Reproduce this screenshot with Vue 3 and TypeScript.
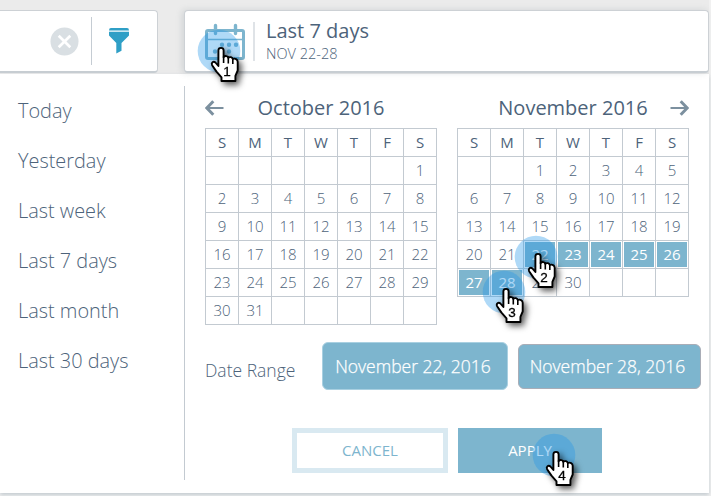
<script setup lang="ts">
interface Cell {
  label: string
  selected: boolean
}
interface Month {
  title: string
  side: string
  weeks: Cell[][]
}
interface Marker {
  step: number
  x: number
  y: number
}

const presets: string[] = ['Today', 'Yesterday', 'Last week', 'Last 7 days', 'Last month', 'Last 30 days']
const weekdays: string[] = ['S', 'M', 'T', 'W', 'T', 'F', 'S']

function buildWeeks(offset: number, days: number, from = 0, to = 0): Cell[][] {
  const weeks: Cell[][] = []
  for (let start = 1 - offset; start <= days; start += 7) {
    weeks.push(
      Array.from({ length: 7 }, (_, i) => {
        const day = start + i
        const inside = day >= 1 && day <= days
        return { label: inside ? String(day) : '', selected: inside && day >= from && day <= to }
      }),
    )
  }
  return weeks
}

const months: Month[] = [
  { title: 'October 2016', side: 'prev', weeks: buildWeeks(6, 31) },
  { title: 'November 2016', side: 'next', weeks: buildWeeks(2, 30, 22, 28) },
]

const markers: Marker[] = [
  { step: 1, x: 197, y: 29 },
  { step: 2, x: 514, y: 235 },
  { step: 3, x: 482, y: 270 },
  { step: 4, x: 532, y: 433 },
]
</script>

<template>
  <div class="page">
    <header class="top">
      <div class="card filter">
        <svg class="clear" viewBox="0 0 30 30">
          <circle cx="15" cy="15" r="14.5" fill="#d9dfe3" />
          <path d="M9 9 21 21M21 9 9 21" stroke="#fff" stroke-width="2.8" />
        </svg>
        <i class="rule" />
        <svg class="funnel" viewBox="0 0 20 26">
          <path d="M0 2.4Q0 0 2 0H18Q20 0 20 2.4V2.6H0Z" fill="#2f9fc6" />
          <path d="M0 3.8H20V7.4L12.5 15V22.8L7.3 25.4V15L0 7.4Z" fill="#2f9fc6" />
        </svg>
      </div>
      <div class="card range">
        <svg class="calendar" viewBox="0 0 40 38" fill="none" stroke="#7db5ce">
          <rect x="1.5" y="7.5" width="37" height="28" rx="1.5" stroke-width="3" />
          <path d="M2 16.5H38" stroke-width="1.5" />
          <path d="M10.5 2.5V10.5M30.5 2.5V10.5" stroke-width="3.4" stroke-linecap="round" />
          <path d="M17 21.7H17.01M24 21.7H24.01M31 21.7H31.01M10 28.5H10.01M17 28.5H17.01M24 28.5H24.01" stroke-width="4.4" stroke-linecap="round" />
        </svg>
        <i class="divider" />
        <div class="summary">
          <span class="name">Last 7 days</span>
          <span class="dates">NOV 22-28</span>
        </div>
      </div>
    </header>

    <main class="panel">
      <nav class="presets">
        <a v-for="p in presets" :key="p">{{ p }}</a>
      </nav>
      <section class="picker">
        <div class="months">
          <div v-for="m in months" :key="m.title" class="month">
            <div class="caption" :class="m.side">
              <svg class="arrow" viewBox="0 0 19 16" fill="none" stroke="#7c909f">
                <path d="M2 8H18.5" stroke-width="2" />
                <path d="M8.3 1.3 1.8 8 8.3 14.7" stroke-width="3" />
              </svg>
              <span>{{ m.title }}</span>
            </div>
            <div class="grid">
              <b v-for="(d, i) in weekdays" :key="i">{{ d }}</b>
              <template v-for="(w, wi) in m.weeks" :key="wi">
                <span v-for="(c, ci) in w" :key="ci" :class="{ selected: c.selected }">{{ c.label }}</span>
              </template>
            </div>
          </div>
        </div>
        <div class="fields">
          <label>Date Range</label>
          <div class="field start">November 22, 2016</div>
          <div class="field end">November 28, 2016</div>
        </div>
        <div class="actions">
          <button class="cancel">CANCEL</button>
          <button class="apply">APPLY</button>
        </div>
      </section>
    </main>

    <svg v-for="m in markers" :key="m.step" class="marker" :style="{ left: m.x + 'px', top: m.y + 'px' }" viewBox="0 0 60 72">
      <circle cx="22" cy="22" r="21.3" fill="#2196e8" fill-opacity=".36" />
      <g class="hand" transform="translate(13.8 18)">
        <path
          d="M7.6 3.3C7.6 0 12.8 0 12.8 3.3V10.2C14.2 8.4 17 8.9 17.4 10.8C19 9.5 21.6 10.1 22 12C24.2 11 26.9 12.2 26.9 14.8V23.5L24.6 28.8V34H10.7V30.3L5.7 24.6L1.3 18.2C.1 15.8 2.6 13.8 4.6 15.5L7.6 19Z"
          fill="#fff" stroke="#000" stroke-width="1.9" stroke-linejoin="round" />
        <path d="M12.8 9.5V16M17.5 10.5V16.5M22 11.8V17" stroke="#000" stroke-width="1.6" />
        <text x="16.2" y="29" text-anchor="middle">{{ m.step }}</text>
      </g>
    </svg>
  </div>
</template>

<style>
body {
  margin: 0;
  background: #f1f1f1;
}
</style>

<style scoped>
* {
  box-sizing: border-box;
}
.page {
  position: relative;
  width: 711px;
  height: 496px;
  overflow: hidden;
  background: #f1f1f1;
  font-family: 'Open Sans', sans-serif;
  color: #4d637a;
}
.top {
  display: flex;
  justify-content: space-between;
  width: 709px;
  height: 74px;
  padding-top: 10px;
  background: #ebebeb;
}
.card {
  display: flex;
  align-items: center;
  height: 63px;
  background: #fff;
  border: 1px solid #cdd1d5;
  border-bottom: 2px solid #c7cdd2;
  border-radius: 4px;
}
.filter {
  width: 158px;
  padding-left: 50px;
  border-left: 0;
  border-radius: 0 4px 4px 0;
}
.clear {
  width: 29px;
  height: 29px;
}
.rule {
  width: 1px;
  height: 48px;
  margin: 0 17px 0 12px;
  background: #c5ccd3;
}
.funnel {
  width: 20px;
  height: 26px;
  margin-top: -1px;
}
.range {
  width: 525px;
  padding-left: 20px;
  box-shadow: -2px 0 6px rgba(120, 130, 140, 0.22);
}
.calendar {
  width: 40px;
  height: 38px;
  margin-top: 2px;
}
.divider {
  width: 2px;
  height: 39px;
  margin: 0 11px 0 8px;
  background: #dfe3e7;
}
.summary {
  display: flex;
  flex-direction: column;
}
.name {
  font-size: 20px;
  line-height: 24px;
}
.dates {
  font-size: 14.5px;
  line-height: 21px;
  font-weight: 300;
}
.panel {
  display: flex;
  width: 709px;
  height: 419px;
  padding-top: 12px;
  background: #fff;
  box-shadow: 0 2px 4px rgba(150, 165, 175, 0.5);
}
.presets {
  display: flex;
  flex-direction: column;
  flex: none;
  width: 185px;
  height: 394px;
  padding-left: 18px;
  border-right: 1px solid #c3cad1;
}
.presets a {
  height: 50px;
  line-height: 50px;
  font-size: 19.9px;
  font-weight: 300;
}
.picker {
  padding-left: 20px;
}
.months {
  display: flex;
  gap: 20px;
  height: 244px;
}
.month {
  width: 232px;
}
.caption {
  display: flex;
  align-items: center;
  justify-content: center;
  position: relative;
  height: 42px;
  font-size: 20px;
}
.arrow {
  position: absolute;
  left: 0;
  top: 13.5px;
  width: 19px;
  height: 16px;
}
.next .arrow {
  left: 213px;
  transform: scaleX(-1);
}
.grid {
  display: grid;
  grid-template-columns: repeat(7, 33px);
  grid-auto-rows: 28px;
  width: 232px;
  border-top: 1px solid #c3cad1;
  border-left: 1px solid #c3cad1;
}
.grid b,
.grid span {
  border-right: 1px solid #c3cad1;
  border-bottom: 1px solid #c3cad1;
  text-align: center;
  font-size: 15px;
  line-height: 27px;
  font-weight: 300;
}
.grid b {
  font-weight: 400;
}
.grid .selected {
  background: #7db5ce;
  box-shadow: inset 0 0 0 1px #fff;
  color: #fff;
  font-weight: 400;
}
.fields {
  display: flex;
  align-items: center;
  height: 72px;
  font-size: 17.5px;
  font-weight: 300;
}
.fields label {
  width: 117px;
  padding-top: 8px;
}
.field {
  display: flex;
  align-items: center;
  justify-content: center;
  background: #7db5ce;
  color: #fff;
  border-radius: 6px;
  -webkit-text-stroke: 0.25px #fff;
}
.start {
  width: 186px;
  height: 48px;
  padding-right: 4px;
  border: 1px solid #a9d0e1;
}
.end {
  width: 183px;
  height: 45px;
  margin-left: 10px;
  padding-right: 4px;
  border: 1px solid #a9adb7;
}
.actions {
  display: flex;
  gap: 10px;
  padding: 26px 0 0 87px;
}
.actions button {
  height: 45px;
  padding: 0 0 2px;
  border: 0;
  font: 400 15px 'Open Sans', sans-serif;
}
.actions .cancel {
  width: 156px;
  background: #fff;
  border: 5px solid #d9e9f1;
  color: #7db5ce;
}
.actions .apply {
  width: 144px;
  background: #7db5ce;
  color: #fff;
}
.marker {
  position: absolute;
  width: 60px;
  height: 72px;
}
.hand {
  filter: drop-shadow(3px 3px 3px rgba(0, 0, 0, 0.65));
}
.hand text {
  font: 13.5px 'Liberation Sans', sans-serif;
  fill: #000;
  stroke: #000;
  stroke-width: 0.3px;
}
</style>
